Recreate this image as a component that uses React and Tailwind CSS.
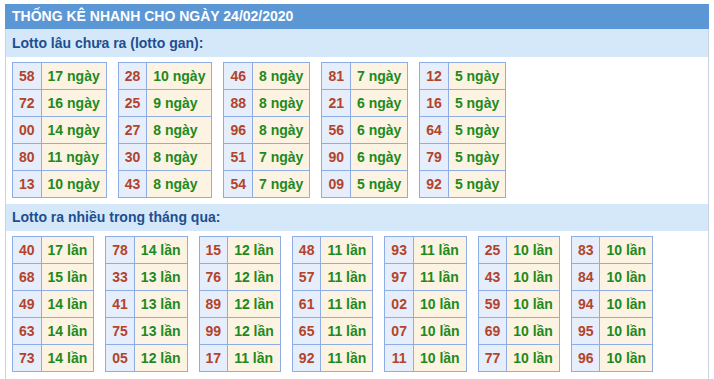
import React from "react";

const gan = [
  [["58", "17 ngày"], ["72", "16 ngày"], ["00", "14 ngày"], ["80", "11 ngày"], ["13", "10 ngày"]],
  [["28", "10 ngày"], ["25", "9 ngày"], ["27", "8 ngày"], ["30", "8 ngày"], ["43", "8 ngày"]],
  [["46", "8 ngày"], ["88", "8 ngày"], ["96", "8 ngày"], ["51", "7 ngày"], ["54", "7 ngày"]],
  [["81", "7 ngày"], ["21", "6 ngày"], ["56", "6 ngày"], ["90", "6 ngày"], ["09", "5 ngày"]],
  [["12", "5 ngày"], ["16", "5 ngày"], ["64", "5 ngày"], ["79", "5 ngày"], ["92", "5 ngày"]],
];

const nhieu = [
  [["40", "17 lần"], ["68", "15 lần"], ["49", "14 lần"], ["63", "14 lần"], ["73", "14 lần"]],
  [["78", "14 lần"], ["33", "13 lần"], ["41", "13 lần"], ["75", "13 lần"], ["05", "12 lần"]],
  [["15", "12 lần"], ["76", "12 lần"], ["89", "12 lần"], ["99", "12 lần"], ["17", "11 lần"]],
  [["48", "11 lần"], ["57", "11 lần"], ["61", "11 lần"], ["65", "11 lần"], ["92", "11 lần"]],
  [["93", "11 lần"], ["97", "11 lần"], ["02", "10 lần"], ["07", "10 lần"], ["11", "10 lần"]],
  [["25", "10 lần"], ["43", "10 lần"], ["59", "10 lần"], ["69", "10 lần"], ["77", "10 lần"]],
  [["83", "10 lần"], ["84", "10 lần"], ["94", "10 lần"], ["95", "10 lần"], ["96", "10 lần"]],
];

function LotoTable({ rows }) {
  return (
    <table className="border-collapse">
      <tbody>
        {rows.map(([so, val], i) => (
          <tr key={i}>
            <td className="border border-[#8eade4] bg-[#e5eefa] px-[6px] py-[5px] text-center leading-[16px] text-[#b3432b]">
              {so}
            </td>
            <td className="border border-[#8eade4] bg-[#fdf3e2] px-[6px] py-[5px] text-left leading-[16px] text-[#1d8a1d] whitespace-nowrap">
              {val}
            </td>
          </tr>
        ))}
      </tbody>
    </table>
  );
}

export default function App() {
  return (
    <div className="bg-white w-[714px] h-[379px] overflow-hidden pt-[4px] font-['Liberation_Sans',Arial,sans-serif]">
      <div className="ml-[5px] w-[704px] h-[375px] border-x border-[#c9d2de]">
        {/* TIEU DE */}
        <div className="-mx-px h-[25px] bg-[#5b96d5] px-[7px] text-[14px] font-bold leading-[25px] text-white">
          THỐNG KÊ NHANH CHO NGÀY 24/02/2020
        </div>

        {/* LOTTO GAN */}
        <div className="h-[28px] bg-[#d5e8fa] px-[6px] text-[14px] font-bold leading-[28px] text-[#1d4f90]">
          Lotto lâu chưa ra (lotto gan):
        </div>
        <div className="flex gap-[11px] px-[6px] pt-[5px] text-[14px] font-bold">
          {gan.map((rows, i) => (
            <LotoTable key={i} rows={rows} />
          ))}
        </div>

        {/* LOTTO RA NHIEU */}
        <div className="mt-[6px] h-[27px] bg-[#d5e8fa] px-[6px] text-[14px] font-bold leading-[27px] text-[#1d4f90]">
          Lotto ra nhiều trong tháng qua:
        </div>
        <div className="flex gap-[11px] px-[6px] pt-[5px] text-[14px] font-bold">
          {nhieu.map((rows, i) => (
            <LotoTable key={i} rows={rows} />
          ))}
        </div>
      </div>
    </div>
  );
}
